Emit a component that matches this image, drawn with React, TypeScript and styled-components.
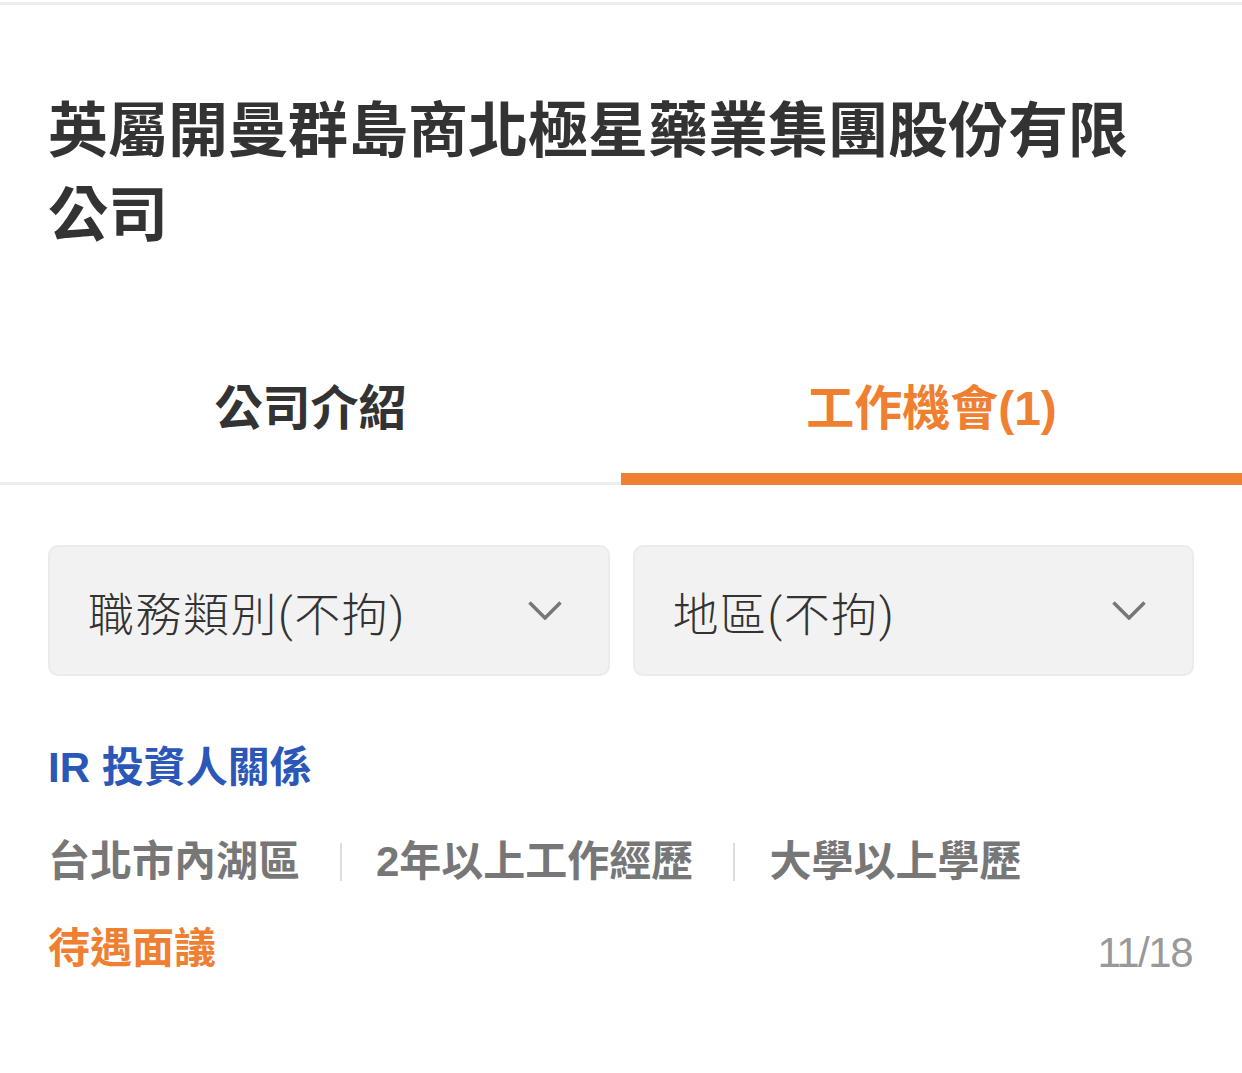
import React from "react";
import styled, { createGlobalStyle } from "styled-components";

const GlobalStyle = createGlobalStyle`
  body {
    margin: 0;
    background: #ffffff;
    font-family: "Liberation Sans", "Noto Sans CJK TC", sans-serif;
  }
`;

const tabs = [
  { id: 1, name: "公司介紹" },
  { id: 2, name: "工作機會(1)" },
];

const filters = ["職務類別(不拘)", "地區(不拘)"];

const jobMeta = ["台北市內湖區", "2年以上工作經歷", "大學以上學歷"];

export default function App() {
  const activeTab = 2;

  return (
    <Page>
      <GlobalStyle />
      <TopLine />
      <Title>英屬開曼群島商北極星藥業集團股份有限公司</Title>

      <TabBar>
        {tabs.map((tab) => (
          <Tab key={tab.id} className={tab.id === activeTab ? "active" : ""}>
            {tab.name}
          </Tab>
        ))}
      </TabBar>

      <FilterRow>
        {filters.map((label) => (
          <Select key={label}>
            <SelectLabel>{label}</SelectLabel>
            <Chevron viewBox="0 0 34 19">
              <path d="M1.5 1.5 L17 17 L32.5 1.5" />
            </Chevron>
          </Select>
        ))}
      </FilterRow>

      <JobCard>
        <JobTitle>IR 投資人關係</JobTitle>
        <MetaRow>
          {jobMeta.map((item) => (
            <MetaItem key={item}>{item}</MetaItem>
          ))}
        </MetaRow>
        <BottomRow>
          <Salary>待遇面議</Salary>
          <PostDate>11/18</PostDate>
        </BottomRow>
      </JobCard>
    </Page>
  );
}

const Page = styled.div`
  width: 1242px;
  padding-top: 2px;
  padding-bottom: 80px;
`;
const TopLine = styled.div`
  height: 3px;
  background: #ededed;
`;
const Title = styled.h1`
  margin: 85px 0 0;
  padding: 0 90px 0 48px;
  font-size: 60px;
  line-height: 84px;
  font-weight: 700;
  color: #333333;
`;
const TabBar = styled.div`
  display: flex;
  margin-top: 67px;
  border-bottom: 3px solid #eeeeee;
`;
const Tab = styled.div`
  position: relative;
  flex: 1;
  height: 157px;
  display: flex;
  align-items: center;
  justify-content: center;
  font-size: 48px;
  font-weight: 700;
  color: #333333;

  &.active {
    color: #ef7f31;
  }
  &.active::after {
    content: "";
    position: absolute;
    left: 0;
    right: 0;
    bottom: -3px;
    height: 12px;
    background: #ef7f31;
  }
`;
const FilterRow = styled.div`
  display: grid;
  grid-template-columns: 1fr 1fr;
  gap: 23px;
  margin-top: 60px;
  padding: 0 48px;
`;
const Select = styled.div`
  height: 131px;
  box-sizing: border-box;
  display: flex;
  align-items: center;
  justify-content: space-between;
  padding: 0 46px 0 38px;
  background: #f2f2f2;
  border: 2px solid #ebebeb;
  border-radius: 10px;
`;
const SelectLabel = styled.span`
  font-family: Roboto, "Noto Sans CJK TC", sans-serif;
  font-size: 46px;
  font-weight: 300;
  letter-spacing: 1.5px;
  color: #333333;
`;
const Chevron = styled.svg`
  width: 34px;
  height: 19px;
  fill: none;
  stroke: #777777;
  stroke-width: 3.5;
`;
const JobCard = styled.div`
  padding: 0 48px;
  margin-top: 62px;
`;
const JobTitle = styled.div`
  font-size: 42px;
  line-height: 60px;
  font-weight: 700;
  color: #2b57b9;
`;
const MetaRow = styled.div`
  display: flex;
  align-items: center;
  margin-top: 34px;
`;
const MetaItem = styled.span`
  display: flex;
  align-items: center;
  font-size: 42px;
  line-height: 60px;
  font-weight: 700;
  color: #777777;

  & + &::before {
    content: "";
    width: 2px;
    height: 38px;
    margin: 0 34px 0 40px;
    background: #dddddd;
  }
`;
const BottomRow = styled.div`
  display: flex;
  align-items: center;
  justify-content: space-between;
  margin-top: 23px;
`;
const Salary = styled.span`
  font-size: 42px;
  line-height: 60px;
  font-weight: 700;
  color: #ef7f31;
`;
const PostDate = styled.span`
  margin-top: 8px;
  margin-right: 2px;
  font-size: 42px;
  line-height: 60px;
  letter-spacing: -1.5px;
  color: #999999;
`;
